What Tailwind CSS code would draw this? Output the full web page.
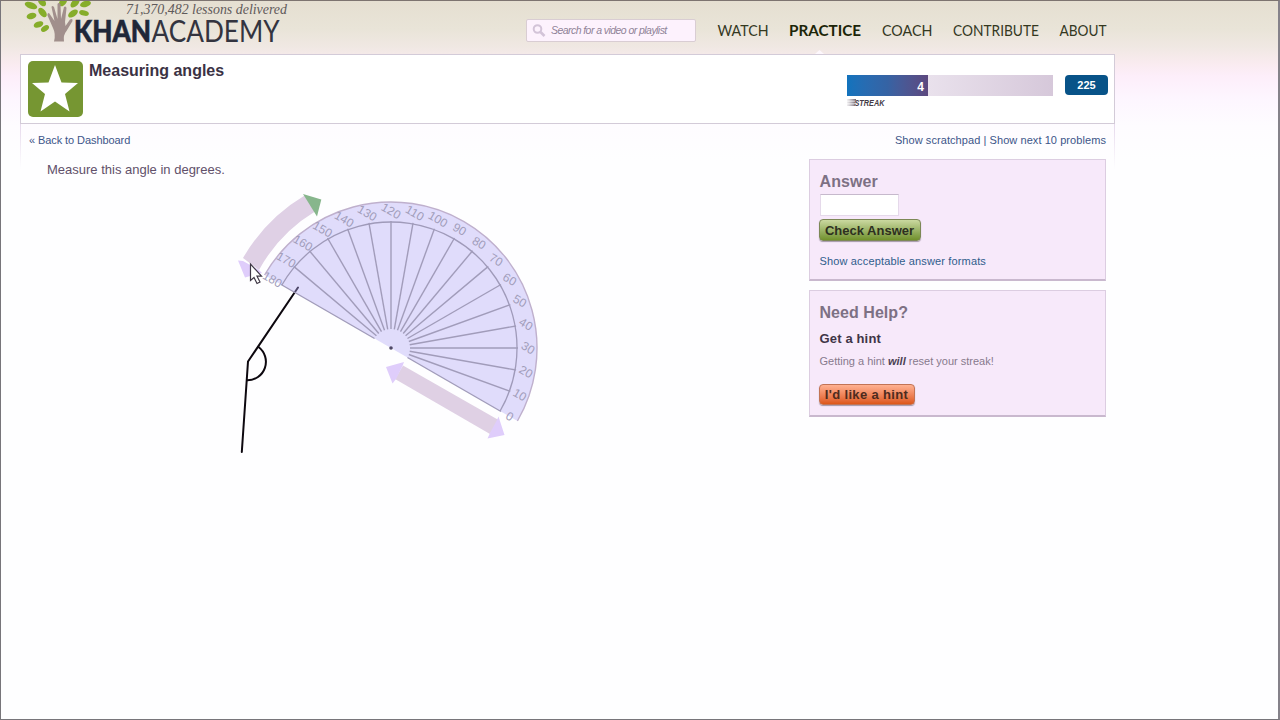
<!DOCTYPE html>
<html lang="en">

<head>
  <meta charset="UTF-8" />
  <meta name="viewport" content="width=device-width, initial-scale=1.0" />
  <title>Measuring angles | Khan Academy</title>
  <script src="https://cdn.jsdelivr.net/npm/@tailwindcss/browser@4"></script>
</head>

<body class="bg-white font-['Liberation_Sans',Arial,sans-serif] overflow-hidden">
  <div class="w-[1280px] h-[720px] overflow-hidden border border-t-[#7d7470] border-l-[#77757a] border-r-2 border-r-[#85828a] border-b-[#77757a] bg-[linear-gradient(to_bottom,#e5dfd1_0px,#e9e4d8_28px,#f0e8e3_46px,#f9ebef_62px,#fdeefa_75px,#fdf6ff_98px,#fefcff_125px,#fefeff_160px)]">

    <!-- Header -->
    <header class="ml-[19px] w-[1094px] h-[53px] flex items-start">
      <svg class="w-[290px] h-[53px] shrink-0" viewBox="20 1 290 53">
        <g fill="#86ad2a">
          <ellipse cx="31" cy="5.500" rx="6.500" ry="3.200" transform="rotate(20 31 5.500)" />
          <ellipse cx="42" cy="2" rx="5" ry="3.200" transform="rotate(50 42 2)" />
          <ellipse cx="31.500" cy="16" rx="5" ry="3" transform="rotate(-15 31.500 16)" />
          <ellipse cx="42.500" cy="12.500" rx="5.500" ry="3.200" transform="rotate(50 42.500 12.500)" />
          <ellipse cx="38.500" cy="24.500" rx="5" ry="3" transform="rotate(-20 38.500 24.500)" />
          <ellipse cx="45" cy="28.500" rx="4.500" ry="2.600" transform="rotate(-35 45 28.500)" />
          <ellipse cx="63" cy="2" rx="5" ry="3.200" transform="rotate(-50 63 2)" />
          <ellipse cx="75" cy="3" rx="5.500" ry="3.200" transform="rotate(-45 75 3)" />
          <ellipse cx="85.500" cy="4" rx="5.500" ry="3" transform="rotate(-15 85.500 4)" />
          <ellipse cx="73" cy="13.500" rx="5.500" ry="3.200" transform="rotate(-35 73 13.500)" />
          <ellipse cx="84" cy="13" rx="5" ry="2.700" transform="rotate(15 84 13)" />
        </g>
        <path fill="#a18f8c" d="M54 41.500Q56 34 53 28L47.500 15.500Q47 13 49 13L54.500 21L51.500 7Q52 5 54 7L57.500 19L57.500 4Q58.500 2 60.500 4L61 19L64 7Q66 5.500 66.500 8L65 22L65.500 26L70 19.500Q73 18 72.500 21L66.500 31Q63 35 64 41.500Z" />
        <text x="126" y="14" textLength="161" lengthAdjust="spacingAndGlyphs" font-family="'Liberation Serif', serif" font-style="italic" font-size="14" fill="#5f5a5a">71,370,482 lessons delivered</text>
        <text x="74" y="41.500" textLength="77" lengthAdjust="spacingAndGlyphs" font-family="Lato, sans-serif" font-weight="900" font-size="30" fill="#1f2738" stroke="#1f2738" stroke-width="0.600">KHAN</text>
        <text x="151.500" y="41.500" textLength="128" lengthAdjust="spacingAndGlyphs" font-family="Lato, sans-serif" font-weight="400" font-size="30" fill="#33343f">ACADEMY</text>
      </svg>

      <div class="ml-[216px] mt-[18px] w-[170px] h-[23px] shrink-0 flex items-center bg-[#fdf2fd] border border-[#d9cdd3] rounded-xs">
        <svg class="ml-[5px] w-[14px] h-[14px]" viewBox="0 0 14 14" fill="none" stroke="#d3c4d8">
          <circle cx="5.500" cy="5" r="3.800" stroke-width="2" />
          <path d="M8.500 8L12.500 12" stroke-width="2.600" />
        </svg>
        <span class="ml-[5px] text-[10.5px] italic tracking-[-0.56px] text-[#8f8297] whitespace-nowrap">Search for a video or playlist</span>
      </div>

      <!-- Main nav -->
      <svg class="ml-[14px] w-[404px] h-[53px] shrink-0" viewBox="710 1 404 53" font-family="Lato, sans-serif" font-size="15.500" fill="#34381f">
        <text x="717.500" y="36" textLength="51" lengthAdjust="spacingAndGlyphs">WATCH</text>
        <text x="789" y="36" textLength="72" lengthAdjust="spacingAndGlyphs" font-weight="700" fill="#1c2508">PRACTICE</text>
        <text x="882" y="36" textLength="50.500" lengthAdjust="spacingAndGlyphs">COACH</text>
        <text x="953" y="36" textLength="86" lengthAdjust="spacingAndGlyphs">CONTRIBUTE</text>
        <text x="1059.500" y="36" textLength="47" lengthAdjust="spacingAndGlyphs">ABOUT</text>
        <path d="M815 54L819.500 50L824 54Z" fill="#fdf7fc" />
      </svg>
    </header>

    <!-- Exercise title bar -->
    <section class="ml-[19px] w-[1095px] h-[70px] bg-white border border-[#d3cbd8] flex items-start">
      <svg class="ml-[7px] mt-[6px] w-[56px] h-[57px]" viewBox="0 0 56 57">
        <rect width="55" height="56" rx="5" fill="#769632" />
        <path fill="#fff" d="M27 4L33.500 21.500L50 22L37 33L41.500 50.500L27 40.500L12.500 50.500L17 33L4 22L20.500 21.500Z" />
      </svg>
      <h1 class="ml-[5px] mt-[4px] text-[16px] leading-[24px] font-bold text-[#3b3244]">Measuring angles</h1>

      <div class="ml-auto mt-[20px] w-[206px]">
        <div class="h-[21px] flex bg-linear-to-r from-[#e9e1ec] from-40% to-[#d6c8da]">
          <div class="w-[81px] bg-linear-to-r from-[#1173bd] via-[#3563a4] to-[#5c487f] text-white text-[12px] leading-[25px] font-bold text-right pr-[4px]">4</div>
        </div>
        <svg class="w-[42px] h-[12px] mt-[2px]" viewBox="0 0 42 12">
          <defs>
            <linearGradient id="trail">
              <stop offset="0" stop-color="#6b5e6f" stop-opacity="0.1" />
              <stop offset="1" stop-color="#4b4050" stop-opacity="0.8" />
            </linearGradient>
          </defs>
          <path fill="url(#trail)" d="M0 1h9v1.800H0zM0 3.600h8.500v1.800H0zM0 6.200h8v1.800H0z" />
          <text x="7.500" y="8" textLength="30" lengthAdjust="spacingAndGlyphs" font-family="'Liberation Sans', sans-serif" font-size="8.500" font-weight="700" font-style="italic" fill="#443b47">STREAK</text>
        </svg>
      </div>
      <div class="ml-[12px] mr-[6px] mt-[20px] w-[43px] h-[20px] rounded-[4px] bg-[#085388] text-white text-[11px] leading-[20px] font-bold text-center">225</div>
    </section>

    <!-- Exercise body -->
    <main class="relative ml-[19px] w-[1095px] h-[595px] flex">
      <div class="absolute left-0 top-0 w-px h-[45px] bg-linear-to-b from-[#e6d9ec] to-transparent"></div>
      <div class="absolute right-0 top-0 w-px h-[45px] bg-linear-to-b from-[#e6d9ec] to-transparent"></div>

      <div class="w-[789px] pl-[9px] pt-[9px]">
        <a href="#" class="block text-[11px] leading-[14px] tracking-[-0.08px] text-[#3c5589]">« Back to Dashboard</a>
        <p class="ml-[18px] mt-[13px] text-[13px] leading-[20px] text-[#61506a]">Measure this angle in degrees.</p>
        <svg class="ml-[171px] w-[360px] h-[290px]" viewBox="200 180 360 290">
          <!-- Angle to measure -->
          <g fill="none" stroke="#0d080f" stroke-width="2" stroke-linecap="round">
            <path d="M298 287.500L248 361.500L241.800 452" />
            <path d="M258.500 347A18.500 18.500 0 0 1 247 380.300" />
          </g>
          <!-- Protractor -->
          <g transform="translate(391 348) rotate(30)">
            <path d="M-146 0A146 146 0 0 1 146 0Z" fill="#b5aaf5" fill-opacity="0.400" />
            <path d="M-146 0A146 146 0 0 1 146 0" fill="none" stroke="#bfb0cd" stroke-width="1.400" />
            <path d="M-126 0A126 126 0 0 1 126 0" fill="none" stroke="#9f9ab9" stroke-width="1.300" />
            <g id="spokes" stroke="#a19cba" stroke-width="1.400"></g>
            <g id="labels" font-family="'Liberation Sans', sans-serif" font-size="12" fill="#a19dba" text-anchor="middle"></g>
          </g>
          <circle cx="391" cy="348" r="1.800" fill="#4f4866" />
          <!-- Rotate handle -->
          <path d="M305 195.300A175 175 0 0 0 243 258L259 270A156 156 0 0 1 315 211.500Z" fill="#dfd0e5" />
          <path d="M303 194L321.300 199.500L317 216.500Z" fill="#87b68c" />
          <path d="M238 260.500L243 261L259 270L262 273L245 277.500Z" fill="#dfcdfb" />
          <!-- Baseline handle -->
          <path d="M403 365.500L498.500 420L490 434L395 379Z" fill="#dfd0e4" />
          <path d="M386 367L404 362L402.500 366L396 379L392.500 383.500Z" fill="#dfcdfb" />
          <path d="M498.500 416.500L504.500 435L487.500 438.500L490 433L497 420Z" fill="#dfcdfb" />
          <!-- Pointer -->
          <path d="M250.500 264V280.500L254 277.500L257 283.500L260 282L257 276.200H261.500Z" fill="#fff" stroke="#3f3745" stroke-width="1.200" />
        </svg>
      </div>

      <aside class="mt-[35px] w-[297px]">
        <div class="h-[122px] px-[9.5px] pt-[10px] bg-[#f7e9fa] border border-[#dccde1] border-b-2 border-b-[#c9b8ce]">
          <h2 class="text-[16px] leading-[24px] font-bold tracking-[0.1px] text-[#7d7184]">Answer</h2>
          <input type="text" class="block w-[79px] h-[22px] bg-white border border-[#e5d9ea] border-t-[#c6b9cc]" />
          <button class="block mt-[3px] -ml-px w-[102px] h-[22px] rounded-[4px] border border-[#7d8856] bg-linear-to-b from-[#cbd9a0] to-[#71912a] shadow-[0_1px_1px_#a397a8] text-[13px] leading-[22px] font-bold text-[#2d2f20] whitespace-nowrap">Check Answer</button>
          <a href="#" class="block mt-[12px] text-[11px] leading-[16px] tracking-[0.15px] text-[#2f5d8c]">Show acceptable answer formats</a>
        </div>
        <div class="mt-[9px] h-[127px] px-[9.5px] pt-[10px] bg-[#f7e9fa] border border-[#dccde1] border-b-2 border-b-[#c9b8ce]">
          <h2 class="text-[16px] leading-[24px] font-bold tracking-[0.05px] text-[#7d7184]">Need Help?</h2>
          <h3 class="mt-[4px] text-[13px] leading-[20px] font-bold tracking-[0.15px] text-[#3f3547]">Get a hint</h3>
          <p class="mt-[4px] text-[11px] leading-[16px] text-[#877a8d]">Getting a hint <b class="italic text-[#4c4253]">will</b> reset your streak!</p>
          <button class="block mt-[15px] -ml-px w-[96px] h-[21px] rounded-[4px] border border-[#c27455] bg-linear-to-b from-[#ffb191] to-[#dd5716] shadow-[0_1px_1px_#a397a8] text-[13px] leading-[20px] font-bold tracking-[0.35px] text-[#4d2b1e] whitespace-nowrap">I'd like a hint</button>
        </div>
      </aside>

      <div class="absolute right-[9px] top-[9px] text-[11px] leading-[14px] tracking-[0.07px] text-[#3c5589] whitespace-nowrap">
        <a href="#">Show scratchpad</a> | <a href="#">Show next 10 problems</a>
      </div>
    </main>
  </div>

  <script>
    const svgNs = 'http://www.w3.org/2000/svg';
    const spokes = document.getElementById('spokes');
    const labels = document.getElementById('labels');

    // One spoke and one label for every 10 degrees
    for (let deg = 0; deg <= 180; deg += 10) {
      const cos = Math.cos(deg * Math.PI / 180);
      const sin = Math.sin(deg * Math.PI / 180);

      const line = document.createElementNS(svgNs, 'line');
      line.setAttribute('x1', 19 * cos);
      line.setAttribute('y1', -19 * sin);
      line.setAttribute('x2', 127 * cos);
      line.setAttribute('y2', -127 * sin);
      spokes.appendChild(line);

      const text = document.createElementNS(svgNs, 'text');
      text.setAttribute('x', 137 * cos);
      text.setAttribute('y', -137 * sin + 4);
      text.textContent = deg;
      labels.appendChild(text);
    }
  </script>
</body>

</html>
